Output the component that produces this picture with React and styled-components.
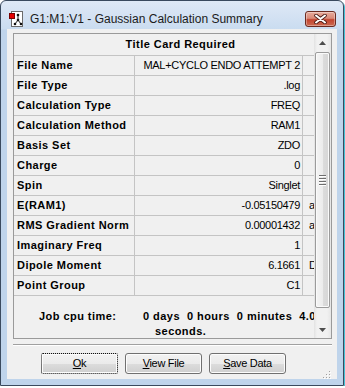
import styled, { createGlobalStyle, css } from "styled-components";

const GlobalStyle = createGlobalStyle`
  html, body { margin: 0; padding: 0; background: #fff; }
  body { font-family: "Liberation Sans", Arial, sans-serif; color: #000; }
`;

const rows = [
  { label: "File Name", value: "MAL+CYCLO ENDO ATTEMPT 2" },
  { label: "File Type", value: ".log" },
  { label: "Calculation Type", value: "FREQ" },
  { label: "Calculation Method", value: "RAM1" },
  { label: "Basis Set", value: "ZDO" },
  { label: "Charge", value: "0" },
  { label: "Spin", value: "Singlet" },
  { label: "E(RAM1)", value: "-0.05150479", unit: "au" },
  { label: "RMS Gradient Norm", value: "0.00001432", unit: "au" },
  { label: "Imaginary Freq", value: "1" },
  { label: "Dipole Moment", value: "6.1661", unit: "Debye" },
  { label: "Point Group", value: "C1" },
];

function AppIcon() {
  return (
    <svg width="16" height="16" viewBox="0 0 16 16">
      <rect x="2.5" y="0.5" width="11" height="15" fill="#fff" stroke="#6b6b6b" />
      <path d="M9 4 L9 9 L6 13 M9 9 L12 13" stroke="#222" strokeWidth="1" fill="none" />
      <circle cx="9" cy="4" r="1.3" fill="#111" />
      <circle cx="9" cy="9" r="1.3" fill="#111" />
      <circle cx="6" cy="13" r="1.3" fill="#111" />
      <circle cx="12" cy="13" r="1.3" fill="#111" />
      <rect x="0.5" y="2.5" width="5" height="5" fill="#e40000" stroke="#7a0000" />
    </svg>
  );
}

function CloseGlyph() {
  return (
    <svg width="13" height="10" viewBox="0 0 13 10">
      <path d="M2 1.5 L11 8.5 M11 1.5 L2 8.5" stroke="#4a1a14" strokeWidth="3.6" strokeLinecap="round" />
      <path d="M2 1.5 L11 8.5 M11 1.5 L2 8.5" stroke="#fff" strokeWidth="2" strokeLinecap="round" />
    </svg>
  );
}

function Arrow({ up }) {
  return (
    <svg width="7" height="4" viewBox="0 0 7 4">
      <path d={up ? "M0 4 L3.5 0 L7 4 Z" : "M0 0 L3.5 4 L7 0 Z"} fill="#4d4d4d" />
    </svg>
  );
}

function Grip() {
  return (
    <svg width="9" height="9" viewBox="0 0 9 9">
      {[
        [7, 1], [7, 4], [4, 4], [7, 7], [4, 7], [1, 7],
      ].map(([x, y]) => (
        <g key={`${x}-${y}`}>
          <rect x={x + 1} y={y + 1} width="1" height="1" fill="#fff" />
          <rect x={x} y={y} width="1" height="1" fill="#a0a0a0" />
        </g>
      ))}
    </svg>
  );
}

export default function App() {
  return (
    <>
      <GlobalStyle />
      <Window>
        <TitleBar>
          <AppIcon />
          <Title>G1:M1:V1 - Gaussian Calculation Summary</Title>
          <CloseButton>
            <CloseGlyph />
          </CloseButton>
        </TitleBar>
        <Client>
          <TableFrame>
            <TableBody>
              <Grid>
                <HeaderCell>Title Card Required</HeaderCell>
                {rows.map((row) => (
                  <Row key={row.label}>
                    <Cell $kind="label">{row.label}</Cell>
                    <Cell $kind="value">{row.value}</Cell>
                    <Cell $kind="unit">{row.unit || ""}</Cell>
                  </Row>
                ))}
              </Grid>
              <JobBlock>
                <JobLabel>Job cpu time:</JobLabel>
                <JobValue>
                  <span>{"0 days  0 hours  0 minutes  4.0"}</span>
                  <Seconds>seconds.</Seconds>
                </JobValue>
              </JobBlock>
            </TableBody>
            <ScrollBar>
              <ScrollButton>
                <Arrow up />
              </ScrollButton>
              <Thumb>
                <GripLines>
                  <i />
                  <i />
                  <i />
                  <i />
                </GripLines>
              </Thumb>
              <Track />
              <ScrollButton>
                <Arrow />
              </ScrollButton>
            </ScrollBar>
          </TableFrame>
          <Separator />
          <ButtonRow>
            <Button $focused>
              <u>O</u>k
            </Button>
            <Button>
              <u>V</u>iew File
            </Button>
            <Button>
              <u>S</u>ave Data
            </Button>
          </ButtonRow>
          <SizeGrip>
            <Grip />
          </SizeGrip>
        </Client>
      </Window>
    </>
  );
}

const Window = styled.div`
  width: 344px;
  height: 386px;
  box-sizing: border-box;
  border: 1px solid #3a4a5e;
  border-radius: 6px 6px 0 0;
  background: linear-gradient(to bottom, #dfe9f6 0, #cadcf0 28px, #bfd4eb 29px, #bfd4eb 100%);
  box-shadow: 1px 1px 0 #45c2d6;
  display: flex;
  flex-direction: column;
`;

const TitleBar = styled.div`
  height: 28px;
  box-sizing: border-box;
  padding: 7px 7px 0 8px;
  display: flex;
  align-items: center;
  gap: 5px;
`;

const Title = styled.div`
  flex: 1;
  font-size: 12px;
  color: #1b1b1b;
  white-space: nowrap;
  padding-top: 1px;
`;

const CloseButton = styled.div`
  width: 31px;
  height: 16px;
  box-sizing: border-box;
  border: 1px solid #6b2a20;
  border-radius: 3px;
  background: linear-gradient(to bottom, #e7ab9c 0%, #d98a78 45%, #c2442f 55%, #cc6a52 100%);
  box-shadow: inset 0 0 0 1px rgba(255, 255, 255, 0.35);
  display: flex;
  align-items: center;
  justify-content: center;
`;

const Client = styled.div`
  position: relative;
  margin: 0 6px 6px;
  height: 350px;
  box-sizing: border-box;
  padding: 4px 5px 0 6px;
  background: #f0f0f0;
  display: flex;
  flex-direction: column;
`;

const TableFrame = styled.div`
  height: 306px;
  box-sizing: border-box;
  border: 1px solid #9a9a9a;
  display: flex;
  background: #f0f0f0;
`;

const TableBody = styled.div`
  flex: 1;
  overflow: hidden;
`;

const Grid = styled.div`
  display: grid;
  grid-template-columns: 121px 168px 44px;
  width: max-content;
`;

const Row = styled.div`
  display: contents;
`;

const boldText = css`
  font-weight: bold;
  font-size: 11px;
  letter-spacing: 0.45px;
`;

const HeaderCell = styled.div`
  grid-column: 1 / -1;
  height: 22px;
  box-sizing: border-box;
  border-bottom: 1px solid #c4c4c4;
  line-height: 21px;
  text-align: center;
  ${boldText}
`;

const Cell = styled.div`
  height: 20px;
  box-sizing: border-box;
  border-bottom: 1px solid #c4c4c4;
  border-right: 1px solid #c4c4c4;
  line-height: 19px;
  font-size: 11px;
  white-space: nowrap;
  overflow: hidden;
  ${({ $kind }) =>
    $kind === "label"
      ? css`
          ${boldText}
          padding-left: 3px;
        `
      : $kind === "value"
      ? css`
          letter-spacing: -0.3px;
          text-align: right;
          padding-right: 2px;
        `
      : css`
          letter-spacing: -0.3px;
          padding-left: 6px;
          border-right: none;
        `}
`;

const JobBlock = styled.div`
  display: flex;
  padding: 13px 0 0 25px;
  line-height: 15px;
  white-space: nowrap;
  ${boldText}
`;

const JobLabel = styled.div`
  width: 104px;
  flex: none;
`;

const JobValue = styled.div`
  display: flex;
  flex-direction: column;
  white-space: pre;
`;

const Seconds = styled.span`
  padding-left: 12px;
`;

const ScrollBar = styled.div`
  width: 17px;
  flex: none;
  display: flex;
  flex-direction: column;
  background: linear-gradient(to right, #e2e2e2 0, #f1f1f1 3px, #f1f1f1 13px, #e6e6e6 17px);
`;

const ScrollButton = styled.div`
  height: 17px;
  flex: none;
  display: flex;
  align-items: center;
  justify-content: center;
`;

const Thumb = styled.div`
  margin: 1px 1px 0;
  height: 256px;
  box-sizing: border-box;
  border: 1px solid #9b9b9b;
  border-radius: 2px;
  background: linear-gradient(to right, #f4f4f4 0%, #ececec 50%, #dcdcdc 51%, #d6d6d6 100%);
  box-shadow: inset 0 0 0 1px #fafafa;
  display: flex;
  align-items: center;
  justify-content: center;
`;

const GripLines = styled.div`
  display: flex;
  flex-direction: column;
  gap: 1px;

  i {
    display: block;
    width: 7px;
    height: 1px;
    background: #6e6e6e;
    border-bottom: 1px solid #fff;
  }
`;

const Track = styled.div`
  flex: 1;
`;

const Separator = styled.div`
  margin-top: 5px;
  border-top: 1px solid #a0a0a0;
  border-bottom: 1px solid #fff;
`;

const ButtonRow = styled.div`
  margin-top: 7px;
  padding-left: 28px;
  display: flex;
  gap: 7px;
`;

const Button = styled.div`
  width: 77px;
  height: 21px;
  box-sizing: border-box;
  border: 1px solid #707070;
  border-radius: 3px;
  background: linear-gradient(to bottom, #f2f2f2 0%, #ebebeb 50%, #dddddd 51%, #cfcfcf 100%);
  box-shadow: inset 0 0 0 1px #fcfcfc;
  font-size: 11px;
  letter-spacing: -0.3px;
  line-height: 19px;
  text-align: center;
  ${({ $focused }) =>
    $focused &&
    css`
      border: 1px dotted #111;
      border-radius: 2px;
    `}

  u {
    text-decoration-thickness: 1px;
    text-underline-offset: 1px;
  }
`;

const SizeGrip = styled.div`
  position: absolute;
  right: 6px;
  bottom: 5px;
  width: 9px;
  height: 9px;
`;
